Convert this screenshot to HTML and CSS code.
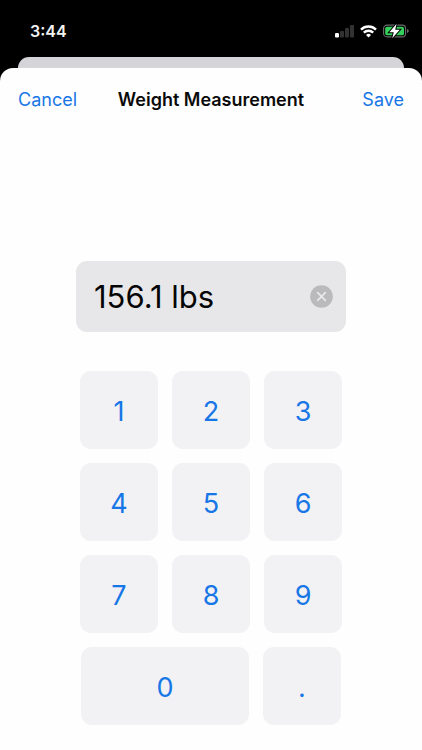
FILE: index.html
```html
<!DOCTYPE html>
<html lang="en">
<head>
<meta charset="utf-8">
<meta name="viewport" content="width=device-width, initial-scale=1">
<title>Weight Measurement</title>
<link rel="stylesheet" href="styles.css">
</head>
<body>
<div class="status">
  <span class="time">3:44</span>
  <div class="indicators">
    <svg width="19" height="13" viewBox="0 0 19 13" aria-hidden="true">
      <rect x="0" y="8" width="4" height="4.500" rx="1.200" fill="#fff"/>
      <rect x="5" y="6" width="4" height="6.500" rx="1" fill="#323232"/>
      <rect x="10" y="3" width="4" height="9.500" rx="1" fill="#323232"/>
      <rect x="15" y="0" width="4" height="12.500" rx="1" fill="#323232"/>
    </svg>
    <svg width="17" height="13" viewBox="0 0 17 13" fill="none" stroke="#fff" stroke-width="2.400" aria-hidden="true">
      <path d="M1 4.600a10.700 10.700 0 0 1 15 0"/>
      <path d="M3.800 7.700a6.700 6.700 0 0 1 9.400 0"/>
      <path d="M8.500 12.500 6 10a3.600 3.600 0 0 1 5 0z" fill="#fff" stroke="none"/>
    </svg>
    <svg width="26" height="16" viewBox="0 -1 26 16" aria-hidden="true">
      <rect x=".6" y="1.100" width="22" height="11.800" rx="3.400" fill="none" stroke="#6a6a6a" stroke-width="1.100"/>
      <path d="M24 5v4c1.300-.5 1.800-1.200 1.800-2S25.300 5.500 24 5z" fill="#6a6a6a"/>
      <rect x="2.200" y="2.700" width="18.800" height="8.600" rx="1.900" fill="#35cf5b"/>
      <path d="M13.600-.2 6.400 8.200h4.400L9.200 14.200l7.600-8.400h-4.600z" fill="#fff" stroke="#000" stroke-width="2" paint-order="stroke"/>
    </svg>
  </div>
</div>
<div class="behind"></div>
<main class="sheet">
  <header class="bar">
    <button class="action" type="button">Cancel</button>
    <h1 class="title">Weight Measurement</h1>
    <button class="action save" type="button">Save</button>
  </header>
  <div class="entry">
    <div class="field">
      <input class="value" type="text" value="156.1 lbs" aria-label="Weight">
      <button class="clear" type="button" aria-label="Clear">
        <svg width="23" height="23" viewBox="0 0 23 23" aria-hidden="true">
          <circle cx="11.500" cy="11.500" r="11.300" fill="#bababd"/>
          <path d="m7.700 7.700 7.600 7.600m0-7.600-7.600 7.600" stroke="#e8e8ea" stroke-width="1.800" stroke-linecap="round"/>
        </svg>
      </button>
    </div>
    <div class="keypad">
      <div class="row">
        <button class="key" type="button">1</button>
        <button class="key" type="button">2</button>
        <button class="key" type="button">3</button>
      </div>
      <div class="row">
        <button class="key" type="button">4</button>
        <button class="key" type="button">5</button>
        <button class="key" type="button">6</button>
      </div>
      <div class="row">
        <button class="key" type="button">7</button>
        <button class="key" type="button">8</button>
        <button class="key" type="button">9</button>
      </div>
      <div class="row">
        <button class="key wide" type="button">0</button>
        <button class="key" type="button">.</button>
      </div>
    </div>
  </div>
</main>
</body>
</html>
```
FILE: styles.css
```css
* {
  box-sizing: border-box;
}

body {
  margin: 0;
  min-height: 100vh;
  display: flex;
  flex-direction: column;
  background: #000;
  font-family: Inter, "Liberation Sans", sans-serif;
}

button,
input {
  margin: 0;
  padding: 0;
  border: 0;
  background: none;
  font: inherit;
}

.status {
  display: flex;
  align-items: center;
  justify-content: space-between;
  height: 57px;
  padding: 5px 13px 0 30px;
}

.time {
  color: #f2f2f2;
  font-size: 16px;
  font-weight: 600;
}

.indicators {
  display: flex;
  align-items: center;
  gap: 6px;
}

.behind {
  height: 11px;
  margin: 0 18px;
  border-radius: 11px 11px 0 0;
  background: #d4d4d9;
}

.sheet {
  flex: 1;
  border-radius: 13px 13px 0 0;
  background: #fefefe;
}

.bar {
  display: grid;
  grid-template-columns: 1fr auto 1fr;
  align-items: center;
  height: 62px;
  padding: 0 18px;
}

.action {
  justify-self: start;
  color: #1877e6;
  font-size: 18px;
}

.save {
  justify-self: end;
}

.title {
  margin: 0;
  color: #0a0a0a;
  font-size: 18px;
  font-weight: 600;
}

.entry {
  display: flex;
  flex-direction: column;
  align-items: center;
  gap: 39px;
  padding: 131px 16px 20px;
}

.field {
  display: flex;
  align-items: center;
  width: 100%;
  max-width: 270px;
  height: 71px;
  padding: 0 13px 0 18px;
  border-radius: 11px;
  background: #e7e7e9;
}

.value {
  flex: 1;
  min-width: 0;
  height: 100%;
  color: #050505;
  font-size: 31px;
}

.clear {
  display: flex;
}

.keypad {
  display: flex;
  flex-direction: column;
  align-items: center;
  gap: 14px;
}

.row {
  display: flex;
  gap: 14px;
}

.key {
  width: 78px;
  height: 78px;
  padding-top: 2px;
  border-radius: 11px;
  background: #f2f2f5;
  color: #1877e6;
  font-size: 27px;
}

.wide {
  width: 168px;
}
```
